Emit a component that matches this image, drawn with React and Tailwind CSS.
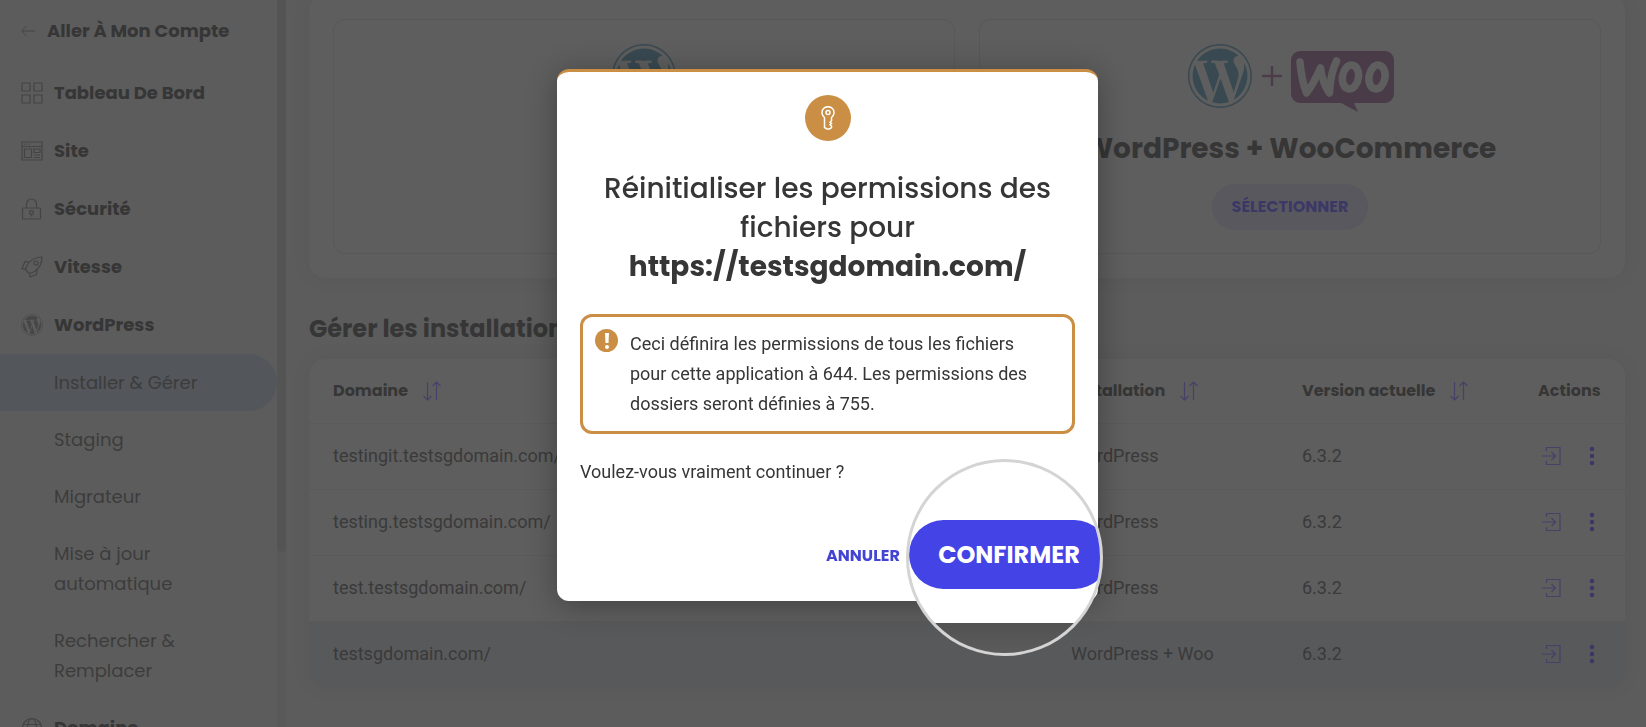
import React from "react";
import { FaWordpress } from "react-icons/fa";

const display = "font-['Poppins','Inter',sans-serif]";

const stroke = { fill: "none", stroke: "currentColor", strokeWidth: 1.2, viewBox: "0 0 22 22", "aria-hidden": true };

const GridIcon = () => (
  <svg {...stroke} className="size-[22px] shrink-0">
    <path d="M1 1h8v8H1zM13 1h8v8h-8zM1 13h8v8H1zM13 13h8v8h-8z" />
  </svg>
);
const SiteIcon = () => (
  <svg {...stroke} className="size-[22px] shrink-0">
    <path d="M1 2h20v18H1zM1 6.500h20M3 4.200h1M5.500 4.200h1M8 4.200h1M3.500 9h7v8.500h-7zM13 9h6v3.500h-6zM13 15h6M13 17.500h6" />
  </svg>
);
const LockIcon = () => (
  <svg {...stroke} className="size-[22px] shrink-0">
    <rect x="1.500" y="10" width="18" height="11" rx="1" />
    <path d="M5.500 10V6a5 5 0 0 1 10 0v4M10.500 16.500V18.500" />
    <circle cx="10.500" cy="14.500" r="1.900" />
  </svg>
);
const RocketIcon = () => (
  <svg {...stroke} className="size-[22px] shrink-0">
    <path d="M21 1c-6 0-11 2.500-14.500 7.500C5 11 4.500 12.500 5 14.500L7.500 17c2 .5 3.500 0 6-1.500C18.500 12 21 7 21 1zM8 6 4 5.500 1 12.500l4 1M16 13.500l-.5 5L9 21l-.5-4" />
    <circle cx="15" cy="7" r="2" />
  </svg>
);
const GlobeIcon = () => (
  <svg {...stroke} className="size-[22px] shrink-0">
    <circle cx="11" cy="11" r="9.500" />
    <ellipse cx="11" cy="11" rx="4.500" ry="9.500" />
    <path d="M2.500 7.500h17M2.500 14.500h17" />
  </svg>
);
const SortIcon = () => (
  <svg viewBox="0 0 20 20" className="size-5" fill="none" stroke="currentColor" strokeWidth="1.2" aria-hidden="true">
    <path d="M5.500 1v18M1.500 15l4 4 4-4M14.500 19V1M10.500 5l4-4 4 4" />
  </svg>
);
const LoginIcon = () => (
  <svg viewBox="0 0 20 20" className="size-5" fill="none" stroke="currentColor" strokeWidth="1.2" aria-hidden="true">
    <path d="M5.500 5V1.500H19v17H5.500V15M1 10h13M10.500 6l4 4-4 4" />
  </svg>
);
const DotsIcon = () => (
  <svg viewBox="0 0 6 20" className="h-5 w-[6px]" fill="currentColor" aria-hidden="true">
    <circle cx="3" cy="3" r="2.200" />
    <circle cx="3" cy="10" r="2.200" />
    <circle cx="3" cy="17" r="2.200" />
  </svg>
);
const KeyIcon = () => (
  <svg viewBox="0 0 16 24" className="h-6 w-4" fill="none" stroke="currentColor" strokeWidth="1.5" aria-hidden="true">
    <path d="M4.500 11.500A6 6 0 1 1 11.500 11.500V15l-1.500 1.300 1.500 1.200-1.500 1.300 1.500 1.200v1.500L9.500 23H7l-2.500-1.500z" />
    <circle cx="8" cy="6.500" r="2" />
  </svg>
);
const WooLogo = () => (
  <svg viewBox="0 0 103 72" className="h-[72px] w-[103px] shrink-0" role="img" aria-label="Woo">
    <path
      className="fill-[#493c48]"
      d="M9 11h85a9 9 0 0 1 9 9v34a9 9 0 0 1-9 9H63l4 9-17-9H9a9 9 0 0 1-9-9V20a9 9 0 0 1 9-9z"
    />
    <g className="fill-none stroke-[#5e5e5e]" strokeWidth="7.500" strokeLinecap="round" strokeLinejoin="round">
      <path d="M9 22c1 12 3 22 6.500 31C21 46 25 38 29.500 28 31 39 34 47 38.500 53 39 41 41 30 45.500 21" />
      <ellipse cx="59.500" cy="37" rx="8" ry="12" transform="rotate(10 59.500 37)" />
      <ellipse cx="86" cy="37" rx="8" ry="12" transform="rotate(10 86 37)" />
    </g>
  </svg>
);

const mainItems = [
  ["Tableau De Bord", GridIcon],
  ["Site", SiteIcon],
  ["Sécurité", LockIcon],
  ["Vitesse", RocketIcon],
  ["WordPress", () => <FaWordpress className="size-[22px] shrink-0 text-[#464646]" />],
];
const subItems = ["Installer & Gérer", "Staging", "Migrateur", "Mise à jour automatique", "Rechercher & Remplacer"];
const rows = [
  ["testingit.testsgdomain.com/", "WordPress"],
  ["testing.testsgdomain.com/", "WordPress"],
  ["test.testsgdomain.com/", "WordPress"],
  ["testsgdomain.com/", "WordPress + Woo"],
];

function MainItem({ label, Icon }) {
  return (
    <li>
      <a href="#" className="flex h-[58px] items-center gap-[11px] pl-[21px] text-lg font-bold text-[#363636]">
        <span className="text-[#444444]"><Icon /></span>
        {label}
      </a>
    </li>
  );
}

function Sidebar() {
  return (
    <aside className={`flex w-[286px] shrink-0 ${display}`}>
      <nav className="min-w-0 flex-1">
        <a href="#" className="flex h-16 items-center gap-3 pb-[2px] pl-[21px] text-lg font-bold text-[#363636]">
          <svg viewBox="0 0 14 12" className="h-3 w-[14px] text-[#444444]" fill="none" stroke="currentColor" aria-hidden="true">
            <path d="M14 6H1M5.500 1 .8 6l4.700 5" />
          </svg>
          Aller À Mon Compte
        </a>
        <ul>
          {mainItems.map(([label, Icon]) => <MainItem key={label} label={label} Icon={Icon} />)}
          {subItems.map((label, i) => (
            <li key={label}>
              <a
                href="#"
                className={`block rounded-r-full pt-[14px] pr-16 pb-[13px] pl-[54px] text-lg leading-[30px] text-[#3c3c3c] ${i === 0 ? "bg-[#53565b]" : ""}`}
              >
                {label}
              </a>
            </li>
          ))}
          <MainItem label="Domaine" Icon={GlobeIcon} />
        </ul>
      </nav>
      <div className="w-[9px] bg-[#595959]">
        <div className="h-[552px] rounded-b-full bg-[#545454]" />
      </div>
    </aside>
  );
}

function InstallCard({ title, woo }) {
  return (
    <article className="flex flex-1 flex-col items-center rounded-xl border border-[#585858] px-4 pt-6 pb-[23px]">
      <div className="flex h-16 items-center gap-[9px]">
        <FaWordpress className="size-[66px] text-[#394951]" />
        {woo && (
          <>
            <svg viewBox="0 0 20 20" className="size-5 text-[#4b3e4a]" stroke="currentColor" strokeWidth="2.500" aria-hidden="true">
              <path d="M10 0v20M0 10h20" />
            </svg>
            <WooLogo />
          </>
        )}
      </div>
      {title && (
        <>
          <h2 className="mt-[21px] text-[28px] leading-10 font-bold text-[#363636]">{title}</h2>
          <button type="button" className="mt-[15px] h-[46px] rounded-full bg-[#59585f] px-5 text-base font-bold text-[#3c3866]">
            SÉLECTIONNER
          </button>
        </>
      )}
    </article>
  );
}

function Th({ children, sort }) {
  return (
    <th scope="col" className="text-left">
      <span className="flex items-center gap-[14px]">
        {children}
        {sort && <button type="button" aria-label="Trier" className="text-[#454168]"><SortIcon /></button>}
      </span>
    </th>
  );
}

function Installations() {
  return (
    <div className="mt-3 overflow-hidden rounded-2xl bg-[#5e5e5e] shadow-[0_0_24px_rgba(0,0,0,0.04)]">
      <table className="w-full table-fixed border-collapse">
        <colgroup>
          <col className="w-6" />
          <col />
          <col className="w-[231px]" />
          <col className="w-[236px]" />
          <col className="w-[87px]" />
        </colgroup>
        <thead className={`text-base text-[#363636] ${display}`}>
          <tr className="h-16 border-b border-[#5a5a5a]">
            <td />
            <Th sort>Domaine</Th>
            <Th sort>Installation</Th>
            <Th sort>Version actuelle</Th>
            <Th>Actions</Th>
          </tr>
        </thead>
        <tbody className="text-lg text-[#3a3a3a]">
          {rows.map(([domain, app], i) => (
            <tr key={domain} className={`h-[66px] ${i === 3 ? "bg-[#58595b]" : "border-b border-[#5a5a5a]"}`}>
              <td />
              <td>{domain}</td>
              <td>{app}</td>
              <td>6.3.2</td>
              <td>
                <div className="flex items-center gap-7 pl-[3px] text-[#454168]">
                  <button type="button" aria-label="Se connecter"><LoginIcon /></button>
                  <button type="button" aria-label="Plus d'actions" className="text-[#3a3666]"><DotsIcon /></button>
                </div>
              </td>
            </tr>
          ))}
        </tbody>
      </table>
    </div>
  );
}

function Dialog() {
  return (
    <div className="fixed inset-0 flex items-start justify-center pt-[69px] pl-[9px]">
      <section
        role="dialog"
        aria-modal="true"
        aria-labelledby="dialog-title"
        className="relative w-[541px] rounded-xl border-t-3 border-[#ca8e45] bg-white px-[23px] pt-[23px] pb-[22px] text-[#363636] shadow-[0_4px_30px_rgba(0,0,0,0.3)]"
      >
        <div className="mx-auto flex size-[46px] items-center justify-center rounded-full bg-[#ca8e45] text-white">
          <KeyIcon />
        </div>
        <h1 id="dialog-title" className={`mt-7 text-center text-[28px] leading-[39px] font-medium ${display}`}>
          Réinitialiser les permissions des fichiers pour <strong className="block font-bold">https://testsgdomain.com/</strong>
        </h1>
        <div className="mt-7 flex gap-3 rounded-xl border-3 border-[#ca8e45] py-3 pr-6 pl-3 text-lg leading-[30px]">
          <span className="flex size-[23px] shrink-0 items-center justify-center rounded-full bg-[#ca8e45] text-white">
            <svg viewBox="0 0 6 18" className="h-[18px] w-[6px]" fill="currentColor" aria-hidden="true">
              <path d="M1 1h4l-.5 10h-3z" />
              <circle cx="3" cy="15" r="2" />
            </svg>
          </span>
          <p>Ceci définira les permissions de tous les fichiers pour cette application à 644. Les permissions des dossiers seront définies à 755.</p>
        </div>
        <p className="mt-[23px] text-lg leading-[30px]">Voulez-vous vraiment continuer ?</p>
        <div className="mt-[46px] flex h-[46px] items-center pl-[246px]">
          <button type="button" className={`text-base font-bold text-[#4343d4] ${display}`}>ANNULER</button>
        </div>
        <div className="absolute top-[387px] left-[349px] flex size-[197px] flex-col items-start overflow-hidden rounded-full border-3 border-[#d4d4d4] bg-white pt-[58px]">
          <button
            type="button"
            className={`h-[69px] w-[200px] shrink-0 rounded-full bg-[#4343e6] text-2xl font-bold text-white ${display}`}
          >
            CONFIRMER
          </button>
          <div className="mt-[34px] w-full flex-1 bg-linear-to-b from-[#525252] to-[#5b5b5b]" />
        </div>
      </section>
    </div>
  );
}

export default function App() {
  return (
    <div className="flex h-screen overflow-hidden bg-[#5c5c5c] font-['Roboto',sans-serif]">
      <Sidebar />
      <main className="min-w-0 flex-1 pr-[21px] pl-[23px]">
        <section className={`-mt-[5px] flex gap-6 rounded-2xl bg-[#5e5e5e] p-6 shadow-[0_0_24px_rgba(0,0,0,0.04)] ${display}`}>
          <InstallCard />
          <InstallCard title="WordPress + WooCommerce" woo />
        </section>
        <h2 className={`mt-[33px] text-2xl leading-9 font-bold text-[#363636] ${display}`}>Gérer les installations</h2>
        <Installations />
      </main>
      <Dialog />
    </div>
  );
}
